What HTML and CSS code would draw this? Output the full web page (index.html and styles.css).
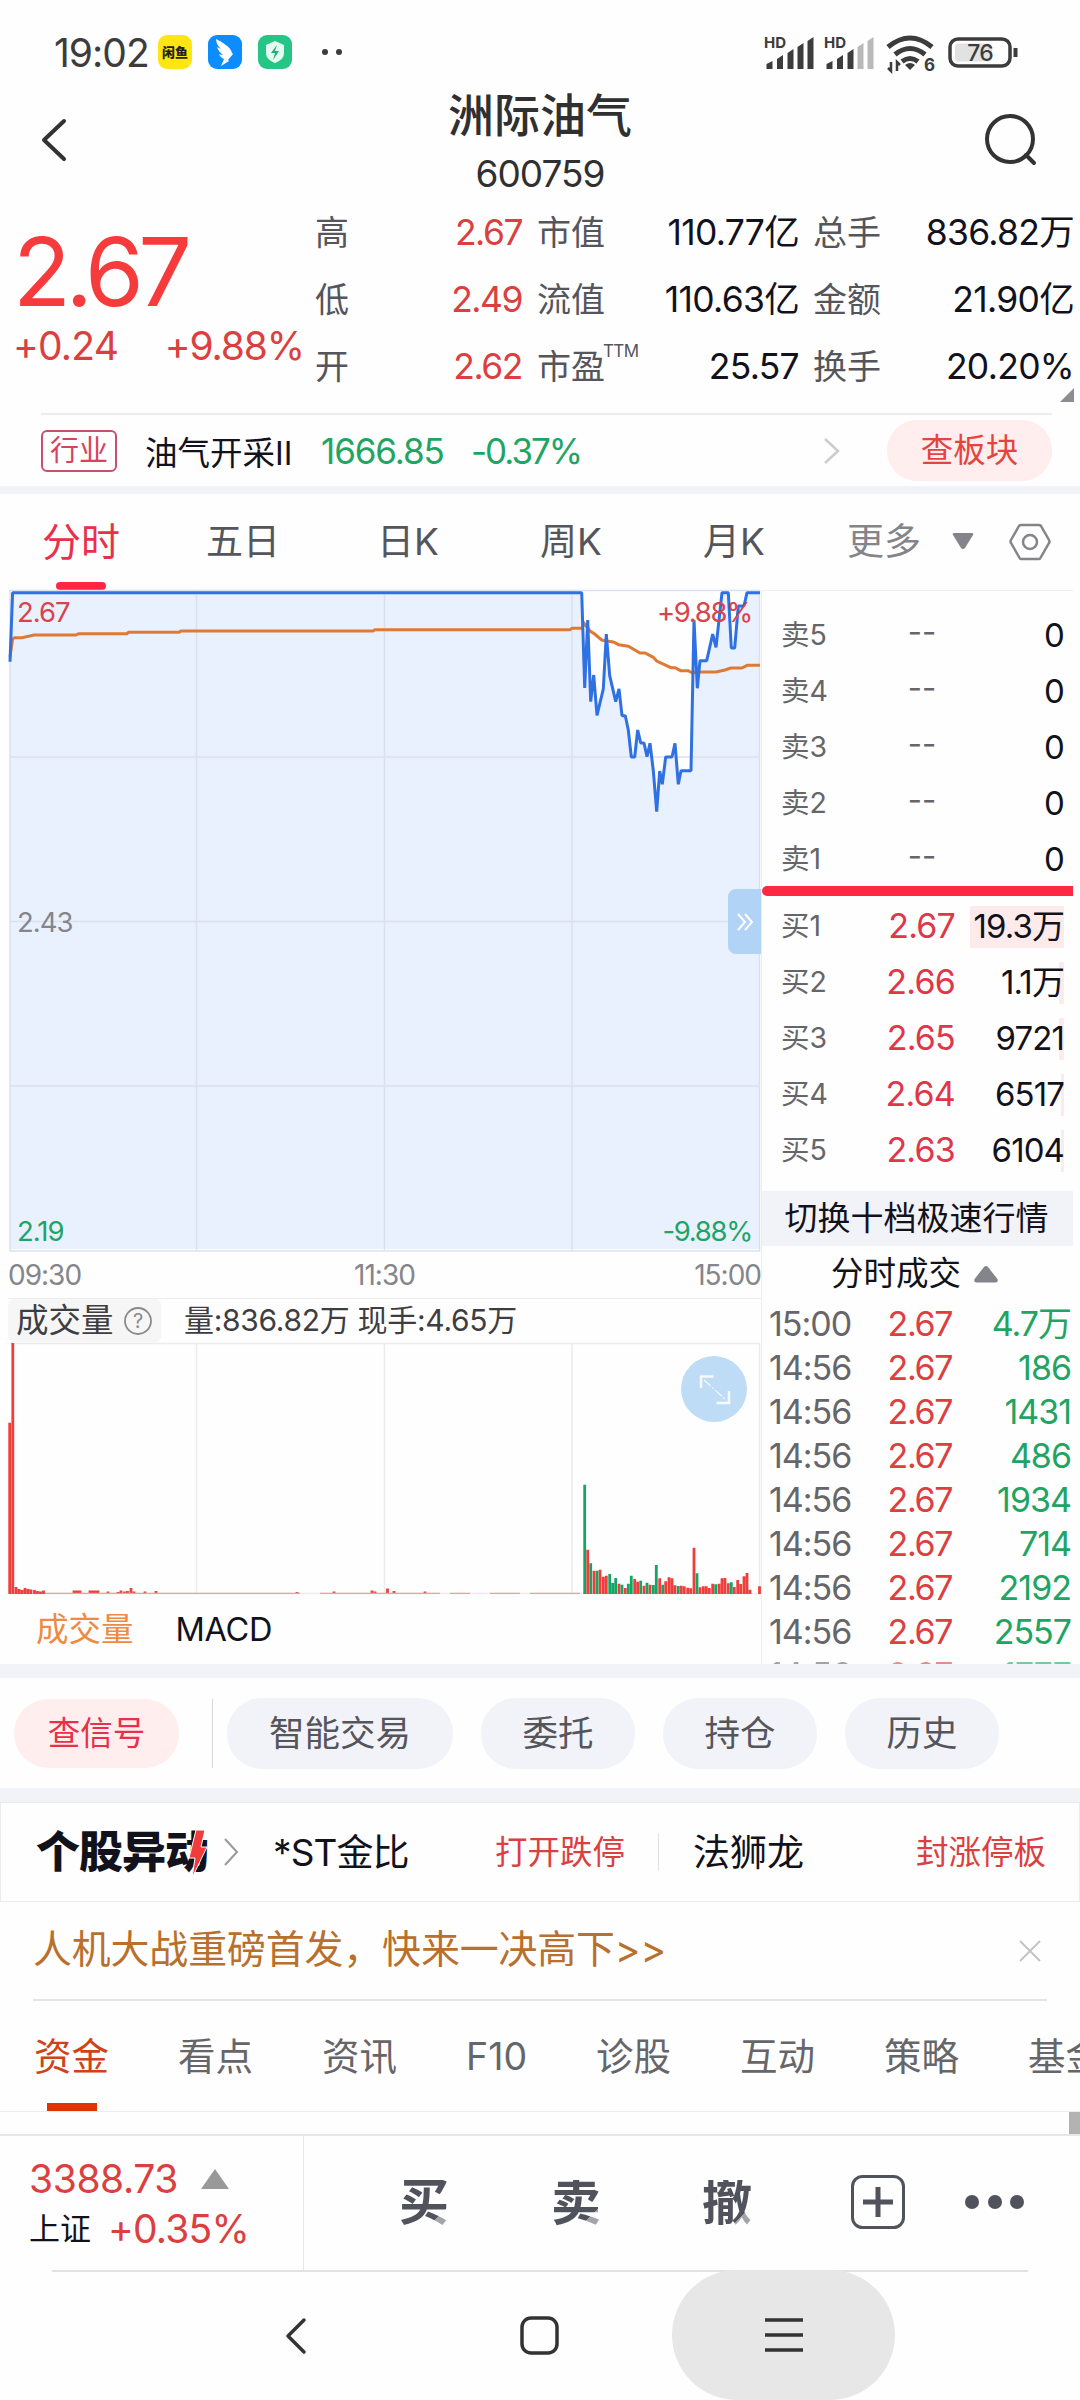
FILE: index.html
```html
<!DOCTYPE html>
<html lang="zh-CN">
<head>
<meta charset="utf-8">
<title>洲际油气 600759</title>
<link rel="stylesheet" href="styles.css">
</head>
<body>
<div class="screen">
  <div class="status">
    <span class="clock">19:02</span>
    <svg class="apps" width="200" height="40" viewBox="0 0 200 40">
      <rect x="1" y="3" width="34" height="34" rx="9" fill="#ffe512"/>
      <text x="18" y="25" class="app-name" text-anchor="middle">闲鱼</text>
      <rect x="51" y="3" width="34" height="34" rx="9" fill="#0b8cff"/>
      <path d="M59 7c6 3 15 8 16 14l1 1-5 6 1 1-8 5 3-7c-3-1-4-3-5-5 2 1 3 1 4 1-3-2-5-5-6-8l4 2c-3-3-5-6-5-10z" fill="#fff"/>
      <rect x="101" y="3" width="34" height="34" rx="9" fill="#25c585"/>
      <path d="M118 9l9 4v8c0 5-4 8-9 10-5-2-9-5-9-10v-8z" fill="#e4fbf1"/>
      <path d="M120 13l-6 8h4l-2 7 6-9h-4z" fill="#1fae76"/>
      <circle cx="168" cy="20" r="3" fill="#3c3c3c"/><circle cx="182" cy="20" r="3" fill="#3c3c3c"/>
    </svg>
    <svg class="signals" width="260" height="44" viewBox="0 0 260 44">
      <g class="hd"><text x="0" y="15">HD</text><text x="60" y="15">HD</text></g>
      <g fill="#3c3c3c">
        <path d="M2.500 36v-5l6-3v8zM13 36V26l6-4v14zM23.500 36V20l6-4v20zM33.500 36V14l6-4v26zM43.500 36V8l6-4v32zM62.500 36v-5l6-3v8zM73 36V26l6-4v14zM83.500 36V20l6-4v20z"/>
        <path d="M93.500 36V14l6-4v26zM103.500 36V8l6-4v32z" fill="#b9b9b9"/>
      </g>
      <g fill="none" stroke="#3c3c3c" stroke-width="5">
        <path d="M124 14q22-18 44 0M131 21.500q15-12 30 0M138 28.500q8-6 16 0"/>
        <path d="M141 32l5 5 5-5q-5-4-10 0z" fill="#3c3c3c" stroke="none"/>
        <path d="M127 29v9l-3-3M133 38v-9l3 3" stroke-width="2.500"/>
      </g>
      <text x="160" y="38" class="six">6</text>
      <rect x="186" y="6" width="60" height="27" rx="8" fill="#fff" stroke="#3c3c3c" stroke-width="3.500"/>
      <rect x="191" y="10.500" width="37" height="18" rx="4" fill="#e2e2e2"/>
      <path d="M251.500 15v9" stroke="#3c3c3c" stroke-width="4"/>
      <text x="216" y="28" class="batt" text-anchor="middle">76</text>
    </svg>
  </div>

  <div class="head">
    <svg width="34" height="50" viewBox="0 0 34 50"><path d="M26 7L6 26l20 19" class="ln"/></svg>
    <div class="title"><h1>洲际油气</h1><p>600759</p></div>
    <svg width="60" height="60" viewBox="0 0 60 60"><circle cx="28" cy="28" r="23" class="ln"/><path d="M44 44l8 8" class="ln"/></svg>
  </div>

  <div class="quote">
    <div class="price">
      <div class="last">2.67</div>
      <div class="chg"><span>+0.24</span><span>+9.88%</span></div>
    </div>
    <div class="facts">
      <span>高</span><b class="r">2.67</b><span>市值</span><b>110.77亿</b><span>总手</span><b>836.82万</b>
      <span>低</span><b class="r">2.49</b><span>流值</span><b>110.63亿</b><span>金额</span><b>21.90亿</b>
      <span>开</span><b class="r">2.62</b><span>市盈<sup>TTM</sup></span><b>25.57</b><span>换手</span><b>20.20%</b>
    </div>
    <svg class="corner" width="14" height="14"><path d="M14 0v14H0z" fill="#8c8c93"/></svg>
  </div>

  <div class="sector">
    <span class="tag">行业</span>
    <span class="sec-name">油气开采II</span>
    <span class="sec-val">1666.85</span>
    <span class="sec-chg">-0.37%</span>
    <svg width="18" height="28" viewBox="0 0 18 28"><path d="M2 2l13 12L2 26" fill="none" stroke="#ccc" stroke-width="2.500"/></svg>
    <span class="pill-red">查板块</span>
  </div>

  <div class="periods">
    <span class="on">分时</span><span>五日</span><span>日K</span><span>周K</span><span>月K</span><span class="more">更多</span>
    <svg class="tri" width="22" height="18"><path d="M2 1h18q2 0 1 2l-8 13q-2 2-4 0L1 3q-1-2 1-2z" fill="#84848b"/></svg>
    <svg width="44" height="40" viewBox="0 0 44 40" fill="none" stroke="#84848b" stroke-width="2.500"><path d="M13 3h18q1 0 2 1l8 14q1 2 0 3l-8 14q-1 2-2 2H13q-1 0-2-2L3 21q-1-1 0-3l8-14q1-1 2-1z"/><circle cx="22" cy="20" r="7"/></svg>
  </div>

  <div class="market">
    <div class="charts">
      <div class="trend">
        <svg width="762" height="664" viewBox="0 588 762 664">
          <path fill="#e9f1ff" d="M10 1249V661.700L12.600 592.700H581.700L584.700 688 587.700 620 590.700 701.700 593.700 675 597 715.300 603.300 689 606.300 634 609.700 675.700 615.700 701.700 619 689 622 715.700H625.300L628.300 730 631.300 757H634.700L637.700 730 640.700 743H644L647 756.700 650 743.300 653.300 770.700 656.700 811.700 659.700 771 662.300 784.300 665.700 757H672L675 743.300 678.300 784.300 681 770.700H691L694 620 697.300 688.300 700 660.700H706.700L712.700 634 716 647.300 722 592.700H728.300L731.300 648H734.700L738.300 606H744L747 592.700H760V1249z"/>
          <path class="grid" d="M10 590.500H760M10 757H760M10 921.500H760M10 1086H760M10 1251H760M10 590V1251M196.500 590V1250M384.500 590V1250M572 590V1250M759.500 590V1251"/>
          <path fill="none" stroke="#e07a32" stroke-width="3" d="M10 657L12.600 639 14.500 637.700H22L34 635H76L78.500 633.700H127L128.500 632.300H179L181 631H373L375 629.700H570L572 628.300H582L584 623.300 590 631 594.700 634 601.700 640 606.700 641 613.300 642 618.700 644.700 628.300 646.300 640 653H645L653.300 657.300 656.700 661 671 667.700H675L680.700 670.700H688.300L692.300 673 697 672H716L725 670 730.700 668H741.700L747.300 665.300H760"/>
          <path fill="none" stroke="#2f70e3" stroke-width="3" d="M10 661.700L12.600 592.700H581.700L584.700 688 587.700 620 590.700 701.700 593.700 675 597 715.300 603.300 689 606.300 634 609.700 675.700 615.700 701.700 619 689 622 715.700H625.300L628.300 730 631.300 757H634.700L637.700 730 640.700 743H644L647 756.700 650 743.300 653.300 770.700 656.700 811.700 659.700 771 662.300 784.300 665.700 757H672L675 743.300 678.300 784.300 681 770.700H691L694 620 697.300 688.300 700 660.700H706.700L712.700 634 716 647.300 722 592.700H728.300L731.300 648H734.700L738.300 606H744L747 592.700H760" stroke-linejoin="bevel"/>
        </svg>
        <span class="lab l1 r">2.67</span><span class="lab l2 r">+9.88%</span>
        <span class="lab l3">2.43</span>
        <span class="lab l4 g">2.19</span><span class="lab l5 g">-9.88%</span>
        <div class="handle"><svg width="20" height="20" viewBox="0 0 20 20"><path d="M3 2l7 8-7 8M10 2l7 8-7 8" fill="none" stroke="#fff" stroke-width="2"/></svg></div>
      </div>
      <div class="axis"><span>09:30</span><span>11:30</span><span>15:00</span></div>
      <div class="vol-head">
        <span class="vol-btn">成交量<svg width="30" height="30" viewBox="0 0 30 30"><circle cx="15" cy="15" r="13" fill="none" stroke="#8a8a8a" stroke-width="1.800"/><text x="15" y="22" text-anchor="middle">?</text></svg></span>
        <span class="vol-info">量:836.82万 现手:4.65万</span>
      </div>
      <div class="volume">
        <svg width="762" height="253" viewBox="0 1342 762 253">
          <path class="grid" d="M10 1343.500H760M10 1593.500H760M196.500 1343V1593M384.500 1343V1593M572 1343V1593M759.500 1343V1595"/>
          <path fill="none" stroke="#ef3e3c" stroke-width="2.800" d="M9.700 1594V1422.700M12.800 1594V1343M16 1594v-7M19 1594v-5M22 1594v-4M25 1594v-6M28 1594v-5M31 1594v-4.500M34.500 1594v-4M37.500 1594v-3M40.500 1594v-2.500M43.500 1594v-3.500M74 1594v-2h6v2M90 1594v-2h8v2M108 1594v-2.500M118 1594v-2M121 1594v-3.500M124.500 1594v-2.500M127.500 1594v-3M131 1594v-6M134 1594v-2.500M145 1594v-2.500M156 1594v-3M297 1594v-2M334 1594v-2.500M372 1594v-3.500M375 1594v-2.500M387.500 1594v-5.500M394 1594v-3M425 1594v-2.500"/>
          <path fill="none" stroke="#e9a09e" stroke-width="1.300" d="M45 1593.300H300M320 1593.300H440M450 1593.300H470M490 1593.300H520M530 1593.300H580"/>
          <path fill="none" stroke="#ef3e3c" stroke-width="2.800" d="M587.700 1594v-44.300M594 1594v-23.300M600 1594v-24.300M603.300 1594v-17.300M606.300 1594v-18.300M619 1594v-10.300M625.300 1594v-6M634.700 1594v-15M637.700 1594v-12.300M644 1594v-8.300M650 1594v-9.300M659.700 1594v-15.700M665.700 1594v-12.700M669 1594v-16.700M672 1594v-15.700M675 1594v-8.700M681.300 1594v-8.300M684.300 1594v-7.700M687.700 1594v-6.300M690.700 1594v-5.700M694 1594v-46.300M700 1594v-6.700M703.300 1594v-7.700M706.300 1594v-7.700M709.300 1594v-6M712.700 1594v-10.300M719 1594v-10.300M722 1594v-15.700M725 1594v-16M728.300 1594v-10.700M734.300 1594v-7M737.700 1594v-14M740.700 1594v-10M744 1594v-17.700M747 1594v-21M750 1594v-4.300M759.500 1594v-7.700"/>
          <path fill="none" stroke="#12a665" stroke-width="2.800" d="M584.700 1594v-109.300M590.700 1594v-30.700M597 1594v-23.300M609.700 1594v-20M612.700 1594v-11M615.700 1594v-16M622 1594v-9.300M628.300 1594v-10.300M631.300 1594v-18.300M640.700 1594v-13.300M647 1594v-11.300M653.300 1594v-9M656.300 1594v-29M662.700 1594v-9.300M678.300 1594v-8M697 1594v-20.700M715.700 1594v-9.700M731.300 1594v-11.700"/>
          <circle cx="714" cy="1389" r="33" fill="#bfdcf6"/>
          <path d="M701 1388V1376.500H713.500M729 1391V1403H716.500" fill="none" stroke="#f4faff" stroke-width="2.500"/>
          <path d="M704 1380L726 1400" stroke="#f4faff" stroke-width="1.200" stroke-dasharray="9 2 2 2"/>
        </svg>
      </div>
      <div class="indicators"><span class="on">成交量</span><span>MACD</span></div>
    </div>

    <div class="book">
      <div class="asks">
        <div class="lvl"><span>卖5</span><i>--</i><b>0</b></div>
        <div class="lvl"><span>卖4</span><i>--</i><b>0</b></div>
        <div class="lvl"><span>卖3</span><i>--</i><b>0</b></div>
        <div class="lvl"><span>卖2</span><i>--</i><b>0</b></div>
        <div class="lvl"><span>卖1</span><i>--</i><b>0</b></div>
      </div>
      <div class="split"></div>
      <div class="bids">
        <div class="lvl"><span>买1</span><em>2.67</em><b class="w1">19.3万</b></div>
        <div class="lvl"><span>买2</span><em>2.66</em><b class="w2">1.1万</b></div>
        <div class="lvl"><span>买3</span><em>2.65</em><b class="w2">9721</b></div>
        <div class="lvl"><span>买4</span><em>2.64</em><b class="w3">6517</b></div>
        <div class="lvl"><span>买5</span><em>2.63</em><b class="w3">6104</b></div>
      </div>
      <div class="switch">切换十档极速行情</div>
      <div class="deals-head">分时成交<svg width="26" height="18"><path d="M3 17.500h20q3-1 1-4L15 2q-2-2-4 0L2 13.500q-2 3 1 4z" fill="#84848b"/></svg></div>
      <div class="deals">
        <div><span>15:00</span><em>2.67</em><b>4.7万</b></div>
        <div><span>14:56</span><em>2.67</em><b>186</b></div>
        <div><span>14:56</span><em>2.67</em><b>1431</b></div>
        <div><span>14:56</span><em>2.67</em><b>486</b></div>
        <div><span>14:56</span><em>2.67</em><b>1934</b></div>
        <div><span>14:56</span><em>2.67</em><b>714</b></div>
        <div><span>14:56</span><em>2.67</em><b>2192</b></div>
        <div><span>14:56</span><em>2.67</em><b>2557</b></div>
        <div class="cut"><span>14:56</span><em>2.67</em><b>1777</b></div>
      </div>
    </div>
  </div>

  <div class="actions">
    <span class="act-red">查信号</span><i></i>
    <span class="act wide">智能交易</span><span class="act">委托</span><span class="act">持仓</span><span class="act">历史</span>
  </div>

  <div class="movers">
    <span class="logo">个股异动<svg width="22" height="50" viewBox="0 0 22 50"><path d="M9 1h9l-4 17h6L5 49l3-20H2z" fill="#f23c3c" stroke="#fff" stroke-width="1"/></svg></span>
    <svg class="chev" width="16" height="30" viewBox="0 0 16 30"><path d="M2 2l12 13L2 28" fill="none" stroke="#999" stroke-width="2"/></svg>
    <span class="mv-name mv-first">*ST金比</span><span class="mv-tag">打开跌停</span><i></i>
    <span class="mv-name">法狮龙</span><span class="mv-tag last-tag">封涨停板</span>
  </div>

  <div class="banner"><span>人机大战重磅首发，快来一决高下&gt;&gt;</span>
    <svg width="24" height="24"><path d="M2 2l20 20M22 2L2 22" stroke="#c4c4c4" stroke-width="2"/></svg>
  </div>

  <div class="sections">
    <span class="on">资金</span><span>看点</span><span>资讯</span><span>F10</span><span>诊股</span><span>互动</span><span>策略</span><span>基金</span>
  </div>
  <div class="peek"><i></i></div>

  <div class="trade">
    <div class="index">
      <div class="ix1"><span>3388.73</span><svg width="28" height="20"><path d="M14 0l14 20H0z" fill="#999"/></svg></div>
      <div class="ix2"><span>上证</span>+0.35%</div>
    </div>
    <div class="ops">
      <span>买</span><span>卖</span><span>撤</span>
      <svg class="plus" width="54" height="54" viewBox="0 0 54 54" fill="none" stroke="#50525c"><rect x="1.500" y="1.500" width="51" height="51" rx="10" stroke-width="3"/><path d="M27 12v30M12 27h30" stroke-width="5"/></svg>
      <svg class="dots" width="60" height="16" fill="#50525c"><circle cx="7" cy="8" r="7"/><circle cx="30" cy="8" r="7"/><circle cx="52" cy="8" r="7"/></svg>
    </div>
  </div>

  <div class="nav">
    <div><svg width="24" height="40" viewBox="0 0 24 40"><path d="M20 4L4 20l16 16" class="ln nl"/></svg></div>
    <div><svg width="40" height="40"><rect x="2" y="2" width="35" height="35" rx="9" class="ln nl"/></svg></div>
    <div class="pressed"><svg width="38" height="36"><path d="M0 3h38M0 18h38M0 33h38" class="ln nl"/></svg></div>
  </div>
</div>
</body>
</html>
```
FILE: styles.css
```css
* { box-sizing: border-box; }
body { margin: 0; background: #fff; font-family: Inter, "Noto Sans CJK SC", sans-serif; color: #12121c; }
.screen { width: 1080px; height: 2400px; overflow: hidden; background: #fefefe; }
svg { display: block; flex: none; }
span, b, i, em, p, h1 { font-style: normal; font-weight: 400; white-space: nowrap; }
.r { color: #dc3f3f; }
.g { color: #1fa463; }
.ln { fill: none; stroke: #333; stroke-width: 4; stroke-linecap: round; stroke-linejoin: round; }

.status { height: 84px; padding: 20px 56px 0 54px; display: flex; align-items: flex-start; color: #3c3c3c; }
.clock { width: 104px; font-size: 39px; line-height: 65px; letter-spacing: -1px; }
.apps { margin-top: 12px; }
.app-name { font-size: 13px; font-weight: 900; fill: #222; }
.signals { margin-left: 407px; margin-top: 13px; }
.hd text { font-size: 15px; font-weight: 700; fill: #3c3c3c; }
.six { font-size: 17px; font-weight: 700; fill: #3c3c3c; }
.batt { font-size: 23px; font-weight: 500; letter-spacing: -1px; fill: #3c3c3c; }

.head { height: 121px; padding: 0 38px; display: grid; grid-template-columns: 34px 1fr 60px; }
.head > svg:first-child { margin-top: 30px; }
.head > svg:last-child { margin-top: 27px; margin-left: 0; }
.title { text-align: center; color: #303030; padding-left: 26px; }
.title h1 { margin: 0; font-size: 46px; font-weight: 500; line-height: 62px; }
.title p { margin: 0; font-size: 37px; line-height: 56px; letter-spacing: -1px; }

.quote { height: 208px; display: flex; position: relative; }
.price { width: 315px; padding: 18px 0 0 13px; color: #f53b3b; }
.last { font-size: 95px; line-height: 98px; letter-spacing: -5.500px; }
.chg { display: flex; justify-content: space-between; padding-right: 11px; font-size: 39px; line-height: 50px; letter-spacing: -.8px; color: #dc3f3f; }
.chg span:last-child { letter-spacing: -1.1px; }
.facts { display: grid; grid-template-columns: 72px 135px 15px 112px 150px 14px 104px 157px; grid-auto-rows: 67px; line-height: 67px; margin-top: -6px; }
.facts span { font-size: 34px; color: #55555c; }
.facts span:nth-child(6n+1) { grid-column: 1; }
.facts b:nth-child(6n+2) { grid-column: 2; }
.facts span:nth-child(6n+3) { grid-column: 4; }
.facts b:nth-child(6n+4) { grid-column: 5; }
.facts span:nth-child(6n+5) { grid-column: 7; }
.facts b:nth-child(6n) { grid-column: 8; }
.facts b { font-size: 35.500px; letter-spacing: -.7px; text-align: right; display: flex; justify-content: flex-end; }
.facts .r { letter-spacing: -1.5px; }
.facts sup { font-size: 17px; line-height: 0; vertical-align: 22px; margin-left: -2px; letter-spacing: -.6px; }
.corner { position: absolute; right: 6px; bottom: 11px; }

.sector { height: 73px; margin: 0 28px 0 41px; display: flex; align-items: center; border-top: 2px solid #ececee; }
.tag { width: 76px; height: 42px; border: 2px solid #c9506a; border-radius: 6px; color: #d9425c; font-size: 29px; line-height: 38px; text-align: center; }
.sec-name { width: 176px; margin-left: 28px; font-size: 32.500px; }
.sec-val, .sec-chg { font-size: 35px; letter-spacing: -1.1px; color: #1fa463; }
.sec-val { width: 150px; }
.sec-chg { width: 352px; letter-spacing: -2px; }
.pill-red { margin-left: 46px; width: 165px; height: 61px; border-radius: 30px; background: #ffeeed; color: #e5433f; font-size: 32.500px; line-height: 61px; text-align: center; }

.periods { height: 104px; border-top: 8px solid #f2f3f8; display: grid; grid-template-columns: 164px 171px 163px 163px 144px 104px 56px 44px; padding-left: 42px; line-height: 95px; font-size: 37px; color: #55555c; align-items: start; }
.periods .on { color: #e8304a; font-size: 39px; position: relative; }
.periods .on::after { content: ""; position: absolute; left: 14px; top: 88px; width: 50px; height: 8px; border-radius: 4px; background: #ff2843; }
.periods .more { color: #84848b; }
.periods .tri { margin-top: 38px; margin-left: 1px; }
.periods svg:last-child { margin-top: 28px; margin-left: 1px; }

.market { height: 1074px; display: flex; }
.charts { width: 761px; }
.grid { fill: none; stroke: #dbe1ec; stroke-width: 1.500; }
.volume .grid { stroke: #ececee; }
.trend { height: 661px; position: relative; }
.trend > svg { position: relative; top: -2px; }
.lab { position: absolute; font-size: 27.500px; line-height: 34px; letter-spacing: -1px; color: #85858c; }
.lab.r { color: #d9434b; }
.lab.g { color: #1fa463; }
.l1, .l3, .l4 { left: 17px; }
.l2, .l5 { right: 9px; }
.lab.l2, .lab.l5 { letter-spacing: -1.3px; }
.l1, .l2 { top: 5px; }
.l3 { top: 315px; }
.l4, .l5 { top: 624px; }
.handle { position: absolute; right: 0; top: 299px; width: 33px; height: 65px; border-radius: 8px 0 0 8px; background: #b0d3f6; padding: 23px 0 0 7px; }
.axis { height: 47px; padding: 0 0 0 8px; display: grid; grid-template-columns: 1fr 1fr 1fr; font-size: 28px; line-height: 48px; letter-spacing: -1px; color: #85858c; }
.axis span:nth-child(2) { text-align: center; }
.axis span:nth-child(3) { text-align: right; }
.vol-head { height: 44px; margin-left: 8px; border-top: 1px solid #ececee; display: flex; color: #3e3e42; line-height: 43px; }
.vol-btn { width: 153px; height: 43px; padding-left: 8px; background: #f6f6f7; border-radius: 6px; display: flex; align-items: center; gap: 9px; font-size: 32.500px; }
.vol-btn text { font-size: 20px; fill: #8a8a8a; }
.vol-info { margin-left: 23px; font-size: 30px; line-height: 42px; letter-spacing: -.3px; }
.volume { height: 253px; }
.indicators { height: 69px; padding-left: 36px; display: flex; gap: 42px; font-size: 32.500px; line-height: 70px; }
.indicators .on { color: #ef8a42; }
.indicators span:last-child { letter-spacing: -.3px; }

.book { width: 312px; height: 1074px; border-top: 1px solid #eee; border-left: 1px solid #eee; overflow: hidden; }
.asks { padding-top: 16px; height: 295px; }
.lvl { height: 56px; line-height: 56px; padding: 0 9px 0 19px; display: grid; grid-template-columns: 80px 94px 1fr; }
.lvl span { font-size: 28.500px; color: #66666a; }
.lvl i { text-align: center; padding-left: 28px; font-size: 31px; line-height: 50px; letter-spacing: 0; color: #66666a; }
.lvl em { text-align: right; font-size: 34px; letter-spacing: -.8px; color: #e0364a; }
.lvl b { text-align: right; font-size: 33px; letter-spacing: -.9px; margin: 7px 0; line-height: 43px; }
.w1 { background: linear-gradient(#fdeaeb, #fdeaeb) right / 94px 42px no-repeat; }
.w2 { background: linear-gradient(#fdeaeb, #fdeaeb) right / 5px 42px no-repeat; }
.w3 { background: linear-gradient(#fdeaeb, #fdeaeb) right / 3px 42px no-repeat; }
.split { height: 10px; background: #ff2843; border-radius: 5px 0 0 5px; }
.bids { padding-top: 2px; height: 295px; }
.switch { height: 55px; background: #f2f3f8; font-size: 33px; line-height: 55px; text-align: center; padding-right: 2px; }
.deals-head { height: 56px; padding-left: 69px; display: flex; align-items: center; gap: 12px; font-size: 32.500px; line-height: 54px; }
.deals > div { height: 44px; line-height: 44px; display: grid; grid-template-columns: 100px 83px 1fr; padding: 0 2px 0 7px; font-size: 34px; letter-spacing: -1px; }
.deals .cut { line-height: 42px; opacity: .6; }
.deals span { color: #66666a; }
.deals em { color: #dc3f3f; text-align: right; letter-spacing: -1.4px; }
.deals b { color: #1fa463; text-align: right; }

.actions { height: 138px; border: solid #f2f3f8; border-width: 14px 0; padding-left: 14px; display: flex; align-items: center; }
.actions i { width: 1px; height: 69px; margin: 0 14px 0 33px; background: #d8d8dc; }
.act-red { width: 165px; height: 69px; border-radius: 35px; background: #ffeeed; color: #e8304a; font-size: 32.500px; line-height: 69px; text-align: center; }
.act { width: 154px; height: 71px; margin-right: 28px; border-radius: 35px; background: #f2f3f8; color: #55555c; font-size: 35.500px; line-height: 71px; text-align: center; }
.wide { width: 226px; }

.movers { height: 100px; border: 1px solid #ebebee; padding: 0 33px 0 35px; display: flex; align-items: center; }
.logo { width: 187px; position: relative; font-size: 44px; font-weight: 900; letter-spacing: -1px; line-height: 98px; }
.logo svg { position: absolute; left: 151px; top: 26px; }
.mv-name { font-size: 37px; line-height: 97px; }
.mv-first { width: 222px; letter-spacing: -.9px; }
.chev { margin-right: 34px; }
.mv-tag { font-size: 32.500px; line-height: 95px; color: #dc3f3f; }
.movers i { width: 1px; height: 38px; margin: 0 34px 0 33px; background: #e2e2e6; }
.last-tag { margin-left: auto; }

.banner { height: 99px; margin: 0 33px; border-bottom: 2px solid #e4e4e6; display: flex; align-items: center; justify-content: space-between; font-size: 38.900px; line-height: 90px; color: #b8702c; padding-right: 5px; }
.banner span { padding-bottom: 3px; letter-spacing: -.1px; }

.sections { height: 111px; padding-left: 34px; border-bottom: 1px solid #ececee; display: flex; gap: 69px; font-size: 37.500px; line-height: 111px; color: #66666a; }
.sections .on { color: #cf431a; position: relative; }
.sections .on::after { content: ""; position: absolute; left: 13px; bottom: 0; width: 50px; height: 8px; background: #dd3500; }
.peek { height: 22px; }
.peek i { display: block; width: 11px; height: 22px; margin-left: auto; background: #b3b3b3; }

.trade { height: 136px; border-top: 2px solid #e6e6e8; display: flex; }
.index { width: 304px; border-right: 1px solid #e6e6e8; padding: 17px 0 0 29px; color: #dc3f3f; letter-spacing: -.4px; }
.ix1 { font-size: 39px; line-height: 52px; display: flex; align-items: center; }
.ix1 span { width: 172px; }
.ix2 { font-size: 39px; line-height: 48px; display: flex; gap: 17px; letter-spacing: -.8px; }
.ix2 span { color: #12121c; font-size: 31px; letter-spacing: 0; }
.ops { display: grid; grid-template-columns: 152px 151px 149px 114px 60px; padding: 0 0 2px 95px; align-items: center; }
.ops span { font-size: 50px; line-height: 72px; font-weight: 700; margin-top: 0; color: transparent; background: linear-gradient(135deg, #50525c 76%, #a3a4aa 76%) 0 14px / 50px 50px no-repeat; -webkit-background-clip: text; background-clip: text; }

.nav { height: 130px; margin: 0 52px; border-top: 2px solid #e2e2e4; display: flex; }
.nav div { height: 128px; display: flex; align-items: center; justify-content: center; }
.nav div:nth-child(1) { width: 366px; padding-left: 121px; }
.nav div:nth-child(2) { width: 140px; margin-left: 52px; }
.nav .pressed { width: 223px; height: 130px; margin-left: 62px; margin-top: -2px; border-radius: 65px; background: #e7e7e7; }
.nav .nl { stroke-width: 3.500; }
```
